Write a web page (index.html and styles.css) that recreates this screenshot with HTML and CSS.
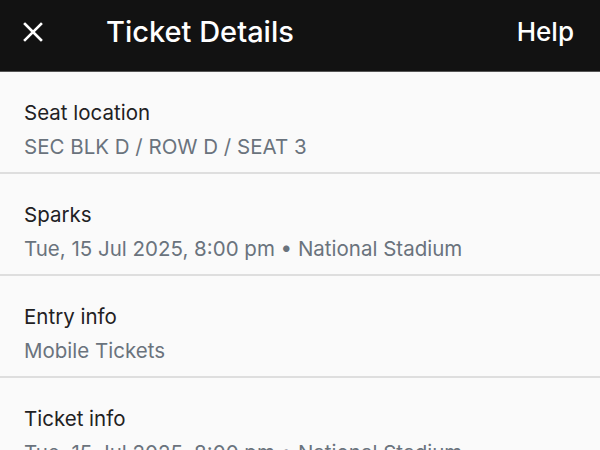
FILE: index.html
```html
<!DOCTYPE html>
<html>
<head>
<meta charset="utf-8">
<link rel="stylesheet" href="styles.css">
</head>
<body>
<header class="topbar">
  <button class="close" aria-label="Close">
    <svg width="20" height="20" viewBox="0 0 20 20"><path d="M2 2 L18 18 M18 2 L2 18" stroke="#fff" stroke-width="2.6" stroke-linecap="square" fill="none"/></svg>
  </button>
  <h1 class="title">Ticket Details</h1>
  <span class="help">Help</span>
</header>
<main class="list">
  <section class="row">
    <div class="label">Seat location</div>
    <div class="value">SEC BLK D / ROW D / SEAT 3</div>
  </section>
  <section class="row">
    <div class="label">Sparks</div>
    <div class="value">Tue, 15 Jul 2025, 8:00 pm • National Stadium</div>
  </section>
  <section class="row">
    <div class="label">Entry info</div>
    <div class="value">Mobile Tickets</div>
  </section>
  <section class="row">
    <div class="label">Ticket info</div>
    <div class="value">Tue, 15 Jul 2025, 8:00 pm • National Stadium</div>
  </section>
</main>
</body>
</html>
```
FILE: styles.css
```css
* { box-sizing: border-box; }
html, body { margin: 0; padding: 0; }
body {
  background: #fafafa;
  font-family: Inter, "Noto Sans", sans-serif;
  overflow: hidden;
}
.topbar {
  height: 72px;
  background: #121212;
  border-bottom: 1px solid #555;
  display: flex;
  align-items: center;
  padding: 0 26px 8px 23px;
  color: #fff;
}
.close {
  background: none;
  border: 0;
  padding: 0;
  width: 20px;
  height: 20px;
  display: flex;
}
.title {
  margin: 0 0 0 63px;
  font-size: 29px;
  font-weight: 500;
  flex: 1;
  letter-spacing: 0;
}
.help {
  font-size: 26px;
  font-weight: 500;
}
.list { display: flex; flex-direction: column; }
.row {
  padding: 28px 24px 0;
  height: 102px;
  border-bottom: 2px solid #dedede;
}
.label {
  font-size: 20.5px;
  line-height: 26px;
  color: #1f2123;
}
.value {
  margin-top: 8px;
  font-size: 20.5px;
  line-height: 26px;
  color: #6a737d;
}
```
